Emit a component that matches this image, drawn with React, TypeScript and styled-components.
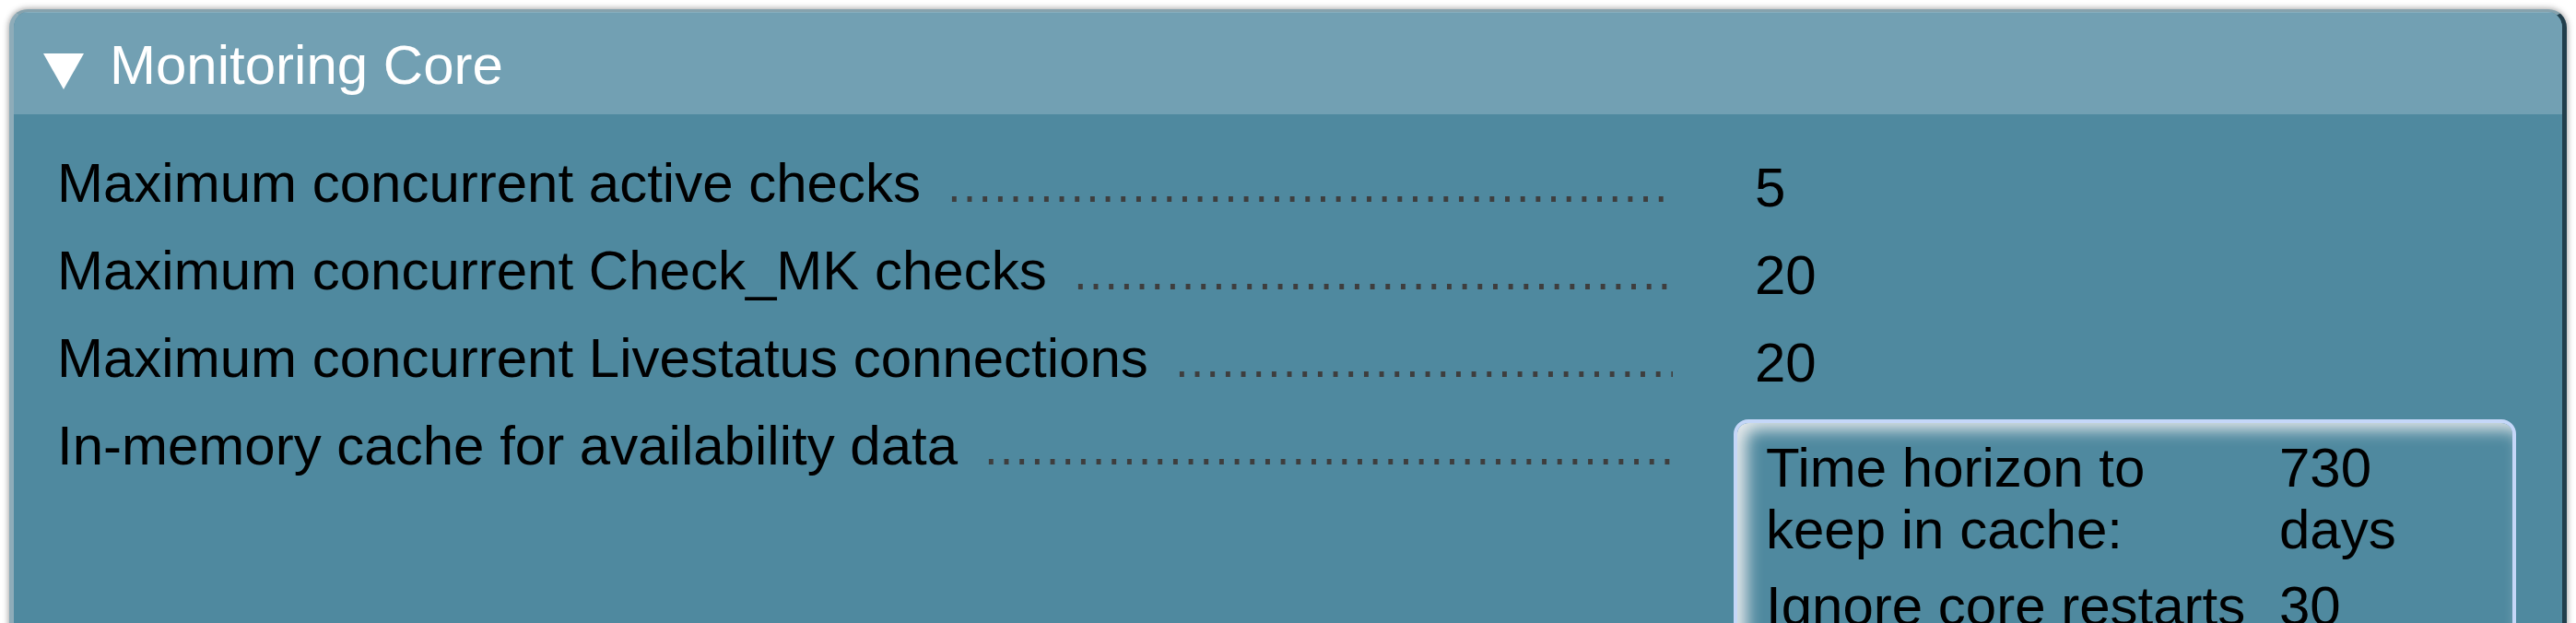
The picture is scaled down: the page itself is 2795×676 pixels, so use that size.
import React from "react";
import styled, { createGlobalStyle } from "styled-components";

const Global = createGlobalStyle`
  html, body {
    margin: 0;
    padding: 0;
    height: 100%;
    overflow: hidden;
    background: #ffffff;
  }
  body {
    font-family: "Liberation Sans", Arial, Helvetica, sans-serif;
  }
`;

const Page = styled.div`
  box-sizing: border-box;
  height: 100vh;
  padding: 10px 10px 0 10px;
`;

const Panel = styled.section`
  box-sizing: border-box;
  height: calc(100% + 40px);
  border-radius: 20px 20px 0 0;
  border-top: 3px solid #86a2ad;
  border-left: 5px solid #8eacb9;
  border-right: 5px solid #213f4c;
  background: #4f899f;
  box-shadow: 0 0 6px 1px rgba(0, 0, 0, 0.35);
  overflow: hidden;
  display: flex;
  flex-direction: column;
`;

const Header = styled.div`
  flex: none;
  height: 111px;
  background: #72a0b3;
  box-shadow: inset 0 1px 0 rgba(255, 255, 255, 0.15);
  display: flex;
  align-items: center;
  gap: 28px;
  padding-left: 32px;
  color: #ffffff;
  font-size: 60px;
  line-height: 67px;
`;

const Toggle = styled.svg`
  flex: none;
  width: 44px;
  height: 39px;
  margin-top: 18px;
`;

const Title = styled.span`
  white-space: nowrap;
  margin-top: 3px;
`;

const Body = styled.div`
  padding: 27px 51px 0 47px;
`;

const Row = styled.div`
  display: grid;
  grid-template-columns: 1753px 1fr;
  column-gap: 66px;
  align-items: start;
  padding: 14px 0 9px 0;
  font-size: 60px;
  line-height: 67px;
  color: #000000;
`;

const Legend = styled.div`
  display: flex;
  overflow: hidden;
  white-space: nowrap;
`;

const LegendText = styled.span`
  flex: none;
`;

const Leader = styled.span`
  flex: 1;
  min-width: 0;
  height: 67px;
  margin-left: 28px;
  background-image: linear-gradient(
    90deg,
    transparent 5.5px,
    #3e3e3e 5.5px,
    #3e3e3e 11px,
    transparent 11px
  );
  background-size: 16.68px 6px;
  background-repeat: repeat-x;
  background-position: 0 48px;
`;

const ValueCell = styled.div`
  padding-top: 5px;
`;

const PlainValue = styled.div`
  padding-left: 23px;
`;

const DictBox = styled.div`
  border: 4px solid #c5d7f8;
  border-radius: 16px;
  padding: 7px 30px 7px 31px;
  box-shadow: inset 10px 7px 17px #e5e9eb;
  display: grid;
  grid-template-columns: 530px 1fr;
  column-gap: 27px;
`;

const DictCell = styled.div`
  padding: 8px 0;
`;

const rows: { label: string; value: string }[] = [
  { label: "Maximum concurrent active checks", value: "5" },
  { label: "Maximum concurrent Check_MK checks", value: "20" },
  { label: "Maximum concurrent Livestatus connections", value: "20" },
];

const dictEntries: { label: string; value: string }[] = [
  { label: "Time horizon to keep in cache:", value: "730 days" },
  { label: "Ignore core restarts", value: "30 seconds" },
];

export default function App() {
  return (
    <>
      <Global />
      <Page>
        <Panel>
          <Header>
            <Toggle viewBox="0 0 44 39">
              <polygon points="0,0 44,0 22,39" fill="#ffffff" />
            </Toggle>
            <Title>Monitoring Core</Title>
          </Header>
          <Body>
            {rows.map((r) => (
              <Row key={r.label}>
                <Legend>
                  <LegendText>{r.label}</LegendText>
                  <Leader />
                </Legend>
                <ValueCell>
                  <PlainValue>{r.value}</PlainValue>
                </ValueCell>
              </Row>
            ))}
            <Row>
              <Legend>
                <LegendText>In-memory cache for availability data</LegendText>
                <Leader />
              </Legend>
              <ValueCell>
                <DictBox>
                  {dictEntries.map((e) => (
                    <React.Fragment key={e.label}>
                      <DictCell>{e.label}</DictCell>
                      <DictCell>{e.value}</DictCell>
                    </React.Fragment>
                  ))}
                </DictBox>
              </ValueCell>
            </Row>
          </Body>
        </Panel>
      </Page>
    </>
  );
}
